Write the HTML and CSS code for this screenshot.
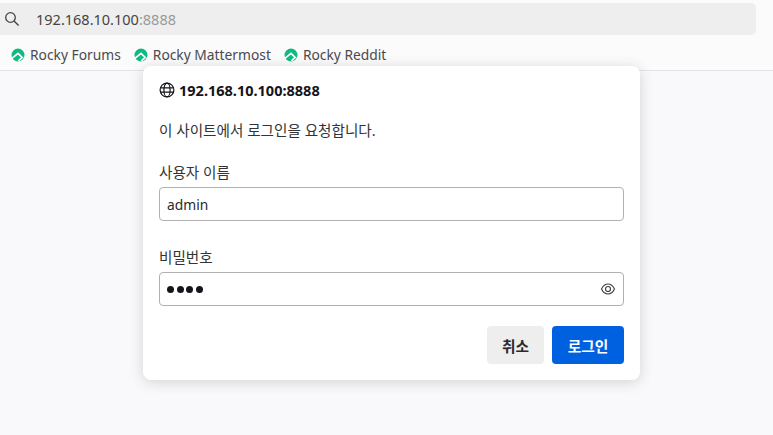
FILE: index.html
```html
<!DOCTYPE html>
<html lang="ko">
<head>
<meta charset="utf-8">
<title>로그인</title>
<link rel="stylesheet" href="styles.css">
</head>
<body>
<header class="chrome">
  <div class="urlbar">
    <svg class="search-icon" viewBox="0 0 16 16" width="16" height="16"><circle cx="6.5" cy="6.5" r="4.8" fill="none" stroke="#444" stroke-width="1.3"/><path d="M10 10l4.600 4.600" stroke="#444" stroke-width="1.4" fill="none"/></svg>
    <span class="url">192.168.10.100<span class="port">:8888</span></span>
  </div>
  <nav class="bookmarks">
    <span class="bookmark"><svg class="rocky" viewBox="0 0 14 14" width="14" height="14"><circle cx="7" cy="7" r="6.5" fill="#10b981"/><path d="M.9 10.300L7 5.300l4.200 4.200-3.800 3.300" fill="none" stroke="#fff" stroke-width="1.7"/></svg>Rocky Forums</span>
    <span class="bookmark"><svg class="rocky" viewBox="0 0 14 14" width="14" height="14"><circle cx="7" cy="7" r="6.5" fill="#10b981"/><path d="M.9 10.300L7 5.300l4.200 4.200-3.800 3.300" fill="none" stroke="#fff" stroke-width="1.7"/></svg>Rocky Mattermost</span>
    <span class="bookmark"><svg class="rocky" viewBox="0 0 14 14" width="14" height="14"><circle cx="7" cy="7" r="6.5" fill="#10b981"/><path d="M.9 10.300L7 5.300l4.200 4.200-3.800 3.300" fill="none" stroke="#fff" stroke-width="1.7"/></svg>Rocky Reddit</span>
  </nav>
</header>
<main class="content"></main>
<section class="dialog">
  <h1 class="origin"><svg viewBox="0 0 16 16" width="16" height="16"><g fill="none" stroke="#15141a" stroke-width="1.2"><circle cx="8" cy="8" r="6.900"/><ellipse cx="8" cy="8" rx="3.100" ry="6.900"/><path d="M1.200 5.800h13.600M1.200 10.200h13.600"/></g></svg>192.168.10.100:8888</h1>
  <p class="message">이 사이트에서 로그인을 요청합니다.</p>
  <label class="field-label">사용자 이름</label>
  <div class="input"><span>admin</span></div>
  <label class="field-label second">비밀번호</label>
  <div class="input"><span class="dots"><i></i><i></i><i></i><i></i></span>
    <svg class="eye" viewBox="0 0 16 16" width="16" height="16"><path d="M1.500 8C3 4.900 5.200 3 8 3s5 1.900 6.500 5C13 11.100 10.800 13 8 13S3 11.100 1.500 8z" fill="none" stroke="#444" stroke-width="1.200"/><circle cx="8" cy="8" r="2.500" fill="none" stroke="#444" stroke-width="1.200"/></svg>
  </div>
  <div class="actions">
    <button class="btn cancel">취소</button>
    <button class="btn primary">로그인</button>
  </div>
</section>
</body>
</html>
```
FILE: styles.css
```css
* { box-sizing: border-box; }
html, body { margin: 0; height: 100%; overflow: hidden; }
body {
  font-family: "Noto Sans", "Noto Sans CJK KR", sans-serif;
  color: #15141a;
  background: #f9f9fb;
  display: flex;
  flex-direction: column;
}
.chrome {
  height: 71px;
  background: #fbfbfb;
  border-bottom: 1px solid #e4e4e7;
  padding-top: 3px;
  flex: none;
}
.urlbar {
  width: 756px;
  height: 32px;
  background: #eeeeee;
  border-radius: 0 5px 5px 0;
  display: flex;
  align-items: center;
  padding-left: 4px;
}
.search-icon { flex: none; }
.url { margin-left: 16px; font-size: 14.5px; color: #444; }
.port { color: #9a9a9a; }
.bookmarks {
  display: flex;
  gap: 13px;
  padding: 10px 0 0 11px;
  font-size: 13.8px;
  color: #4a4a4f;
}
.bookmark { display: flex; align-items: center; gap: 5px; line-height: 20px; }
.rocky { flex: none; }
.content { flex: 1; }
.dialog {
  position: absolute;
  left: 143px;
  top: 66px;
  width: 497px;
  height: 314px;
  background: #fff;
  border-radius: 8px;
  box-shadow: 0 2px 14px rgba(58, 57, 68, 0.2);
  padding: 14px 16px 16px;
  display: flex;
  flex-direction: column;
}
.origin {
  margin: 0;
  display: flex;
  align-items: center;
  gap: 4px;
  font-size: 14.5px;
  font-weight: 700;
  line-height: 20px;
}
.message { margin: 20px 0 0; font-size: 14.6px; line-height: 20px; color: #333; }
.field-label { display: block; margin-top: 22px; font-size: 14.6px; line-height: 20px; color: #333; }
.field-label.second { margin-top: 26px; }
.input {
  margin-top: 5px;
  height: 34px;
  border: 1px solid #b0b0b0;
  border-radius: 4px;
  display: flex;
  align-items: center;
  justify-content: space-between;
  padding: 0 7px;
  font-size: 13.8px;
  color: #2a2a2e;
}
.dots { display: flex; gap: 2.700px; }
.dots i { width: 7px; height: 7px; border-radius: 50%; background: #15141a; }
.eye { flex: none; }
.actions { margin-top: auto; display: flex; justify-content: flex-end; gap: 8px; }
.btn {
  height: 38px;
  border: 0;
  border-radius: 4px;
  font: 700 14.7px "Noto Sans", "Noto Sans CJK KR", sans-serif;
  padding: 0;
}
.cancel { width: 57px; background: #eeeeee; color: #2a2a2e; }
.primary { width: 72px; background: #0061e0; color: #fff; }
```
